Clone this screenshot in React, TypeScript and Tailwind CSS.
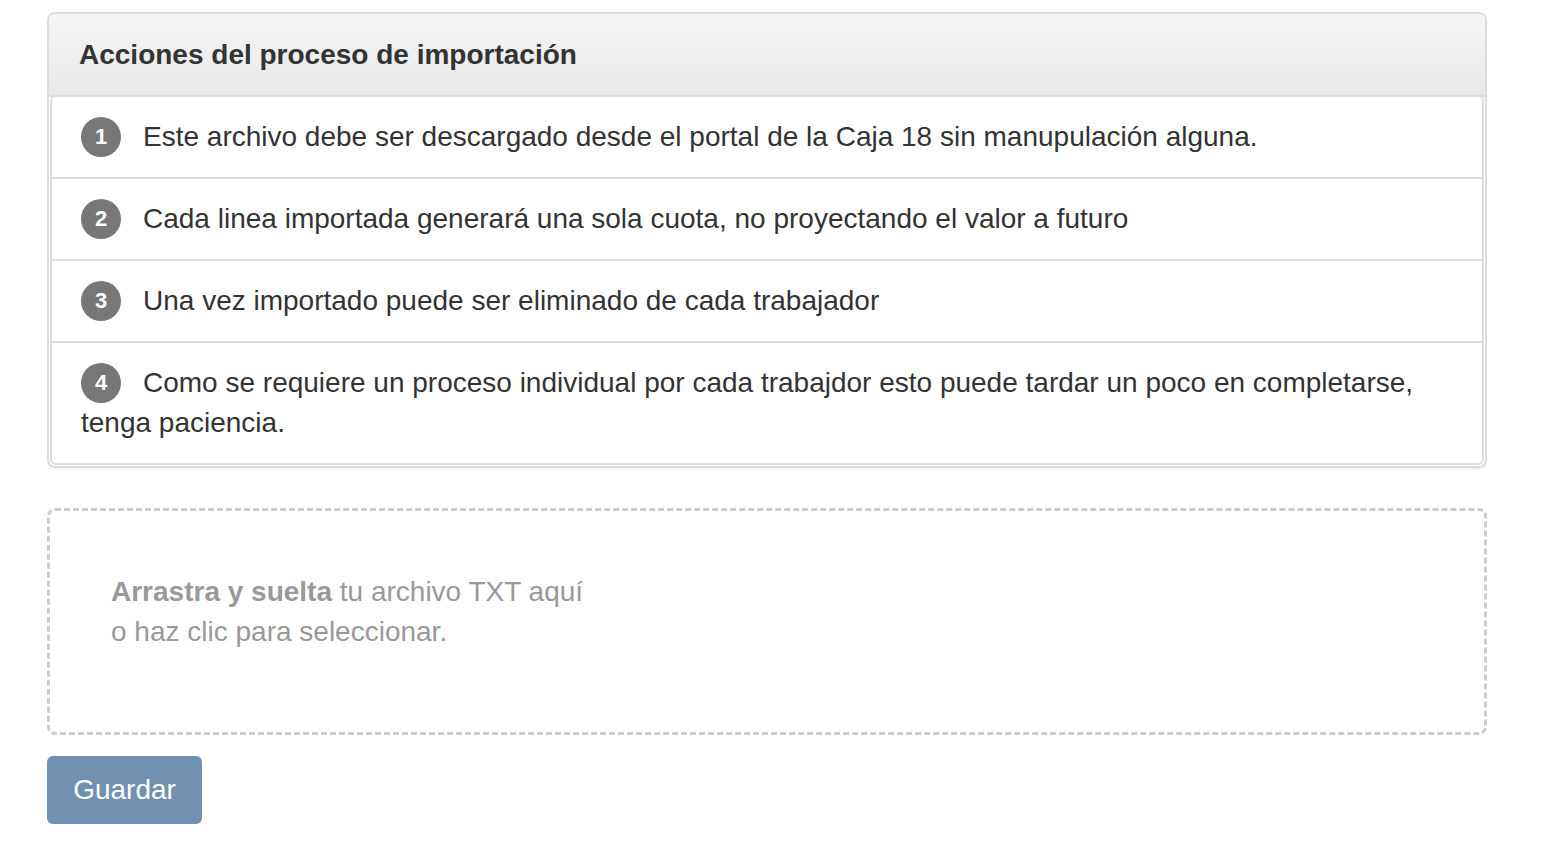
export default function App() {
  const steps = [
    "Este archivo debe ser descargado desde el portal de la Caja 18 sin manupulación alguna.",
    "Cada linea importada generará una sola cuota, no proyectando el valor a futuro",
    "Una vez importado puede ser eliminado de cada trabajador",
    "Como se requiere un proceso individual por cada trabajdor esto puede tardar un poco en completarse, tenga paciencia.",
  ];

  return (
    <div className="min-h-screen bg-white font-['Liberation_Sans',Arial,sans-serif] text-[#333] text-[28px] leading-[40px]">
      <div className="w-[1440px] ml-[47px] pt-[12px]">
        {/* Panel */}
        <div className="border-2 border-[#ddd] rounded-[8px] shadow-[0_2px_2px_rgba(0,0,0,0.05)] overflow-hidden">
          <div className="h-[83px] px-[30px] flex items-center bg-gradient-to-b from-[#f5f5f5] to-[#e8e8e8] border-b-2 border-[#ddd]">
            <h3 className="font-bold text-[28px] text-[#333]">Acciones del proceso de importación</h3>
          </div>
          <div className="mx-px mb-px border-2 border-[#ddd] rounded-[6px] -mt-[2px] bg-white">
            {steps.map((s, i) => (
              <div
                key={i}
                className={`px-[29px] py-[20px] ${i > 0 ? "border-t-2 border-[#ddd]" : ""}`}
              >
                <span className="inline-flex items-center justify-center w-[40px] h-[40px] -mt-[4px] align-middle rounded-full bg-[#777] text-white text-[22px] font-bold leading-none mr-[22px]">
                  {i + 1}
                </span>
                {s}
              </div>
            ))}
          </div>
        </div>

        {/* Dropzone */}
        <div className="mt-[40px] h-[227px] border-[3px] border-dashed border-[#ccc] rounded-[8px] px-[61px] pt-[61px] text-[#999]">
          <p>
            <b>Arrastra y suelta</b> tu archivo TXT aquí
          </p>
          <p>o haz clic para seleccionar.</p>
        </div>

        {/* Button */}
        <button className="mt-[21px] w-[155px] h-[68px] rounded-[6px] bg-[#7091b0] text-white text-[28px]">
          Guardar
        </button>
      </div>
    </div>
  );
}
